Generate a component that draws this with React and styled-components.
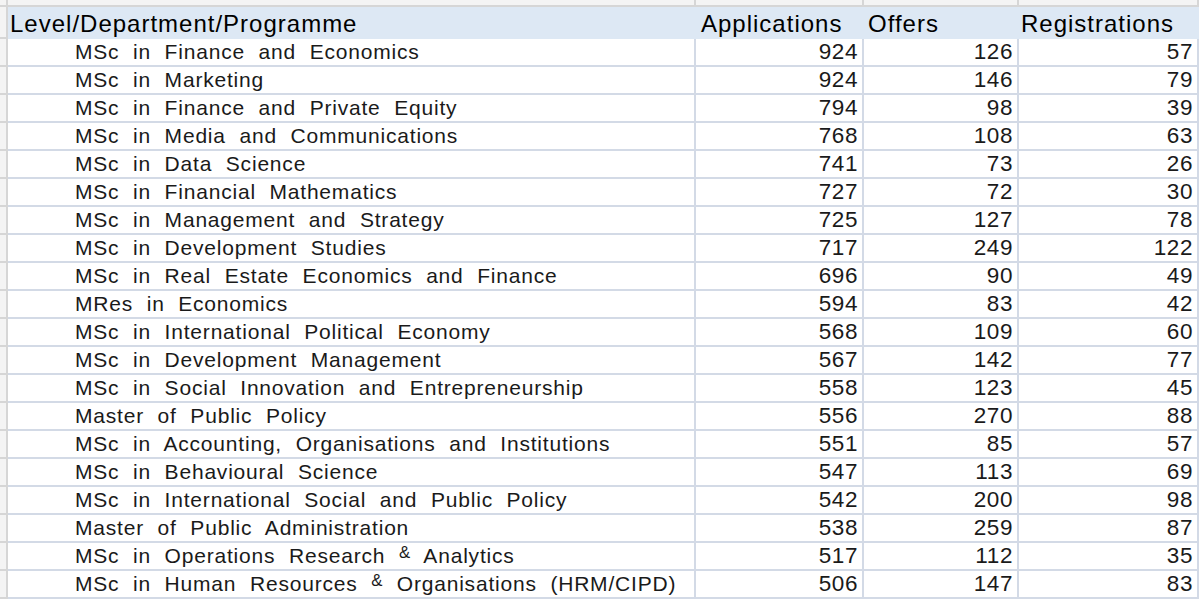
import React from 'react'
import styled, { createGlobalStyle } from 'styled-components'

const GlobalStyle = createGlobalStyle`
  html, body {
    margin: 0;
    padding: 0;
    background: #ffffff;
  }
  body {
    font-family: 'Liberation Sans', Arial, sans-serif;
    color: #000;
  }
`

const COLUMNS = '8px 688px 168px 155px 180px 3px'

const programmes = [
  ['MSc in Finance and Economics', 924, 126, 57],
  ['MSc in Marketing', 924, 146, 79],
  ['MSc in Finance and Private Equity', 794, 98, 39],
  ['MSc in Media and Communications', 768, 108, 63],
  ['MSc in Data Science', 741, 73, 26],
  ['MSc in Financial Mathematics', 727, 72, 30],
  ['MSc in Management and Strategy', 725, 127, 78],
  ['MSc in Development Studies', 717, 249, 122],
  ['MSc in Real Estate Economics and Finance', 696, 90, 49],
  ['MRes in Economics', 594, 83, 42],
  ['MSc in International Political Economy', 568, 109, 60],
  ['MSc in Development Management', 567, 142, 77],
  ['MSc in Social Innovation and Entrepreneurship', 558, 123, 45],
  ['Master of Public Policy', 556, 270, 88],
  ['MSc in Accounting, Organisations and Institutions', 551, 85, 57],
  ['MSc in Behavioural Science', 547, 113, 69],
  ['MSc in International Social and Public Policy', 542, 200, 98],
  ['Master of Public Administration', 538, 259, 87],
  ['MSc in Operations Research & Analytics', 517, 112, 35],
  ['MSc in Human Resources & Organisations (HRM/CIPD)', 506, 147, 83]
]

const Sheet = styled.div`
  width: 1202px;
  height: 604px;
  overflow: hidden;
  background: #ffffff;
`

const Row = styled.div`
  display: grid;
  grid-template-columns: ${COLUMNS};
  height: ${(p) => p.$height}px;
`

const StripCell = styled.div`
  box-sizing: border-box;
  background: #f4f4f4;
  border-right: 2px solid #d6d6d6;
  border-bottom: 2px solid #d6d6d6;
`

const RowHead = styled.div`
  box-sizing: border-box;
  background: #f4f4f4;
  border-right: 2px solid #d6d6d6;
  border-bottom: 2px solid #d6d6d6;
`

const HeaderCell = styled.div`
  box-sizing: border-box;
  background: #dde8f4;
  padding: 3px 0 0 ${(p) => p.$pad || 3}px;
  font-size: 24px;
  line-height: 28px;
  letter-spacing: 1px;
  white-space: nowrap;
`

const Cell = styled.div`
  box-sizing: border-box;
  border-right: 2px solid #d3dae6;
  border-bottom: 2px solid #d3dae6;
  font-size: ${(p) => (p.$numeric ? 22.5 : 21)}px;
  line-height: 26px;
  color: #1a1a1a;
  letter-spacing: ${(p) => (p.$numeric ? '0.6px' : '0.8px')};
  word-spacing: 7px;
  white-space: nowrap;
  text-align: ${(p) => (p.$numeric ? 'right' : 'left')};
  padding: 0 ${(p) => (p.$numeric ? 4 : 0)}px 0 ${(p) => (p.$numeric ? 0 : 67)}px;
`

const Blank = styled.div`
  background: #ffffff;
`

const Amp = styled.span`
  font-size: 0.8em;
  line-height: 0;
  vertical-align: 0.3em;
`

const withAmp = (text) =>
  text.split('&').map((part, i) => (
    <React.Fragment key={i}>
      {i > 0 && <Amp>&amp;</Amp>}
      {part}
    </React.Fragment>
  ))

const App = () => (
  <>
    <GlobalStyle />
    <Sheet>
      <Row $height={7}>
        <StripCell />
        <StripCell />
        <StripCell />
        <StripCell />
        <StripCell />
        <Blank />
      </Row>
      <Row $height={32}>
        <RowHead />
        <HeaderCell $pad={2}>Level/Department/Programme</HeaderCell>
        <HeaderCell $pad={5}>Applications</HeaderCell>
        <HeaderCell $pad={4}>Offers</HeaderCell>
        <HeaderCell $pad={2}>Registrations</HeaderCell>
        <Blank />
      </Row>
      {programmes.map(([name, applications, offers, registrations]) => (
        <Row key={name} $height={28}>
          <RowHead />
          <Cell>{withAmp(name)}</Cell>
          <Cell $numeric>{applications}</Cell>
          <Cell $numeric>{offers}</Cell>
          <Cell $numeric>{registrations}</Cell>
          <Blank />
        </Row>
      ))}
    </Sheet>
  </>
)

export default App
